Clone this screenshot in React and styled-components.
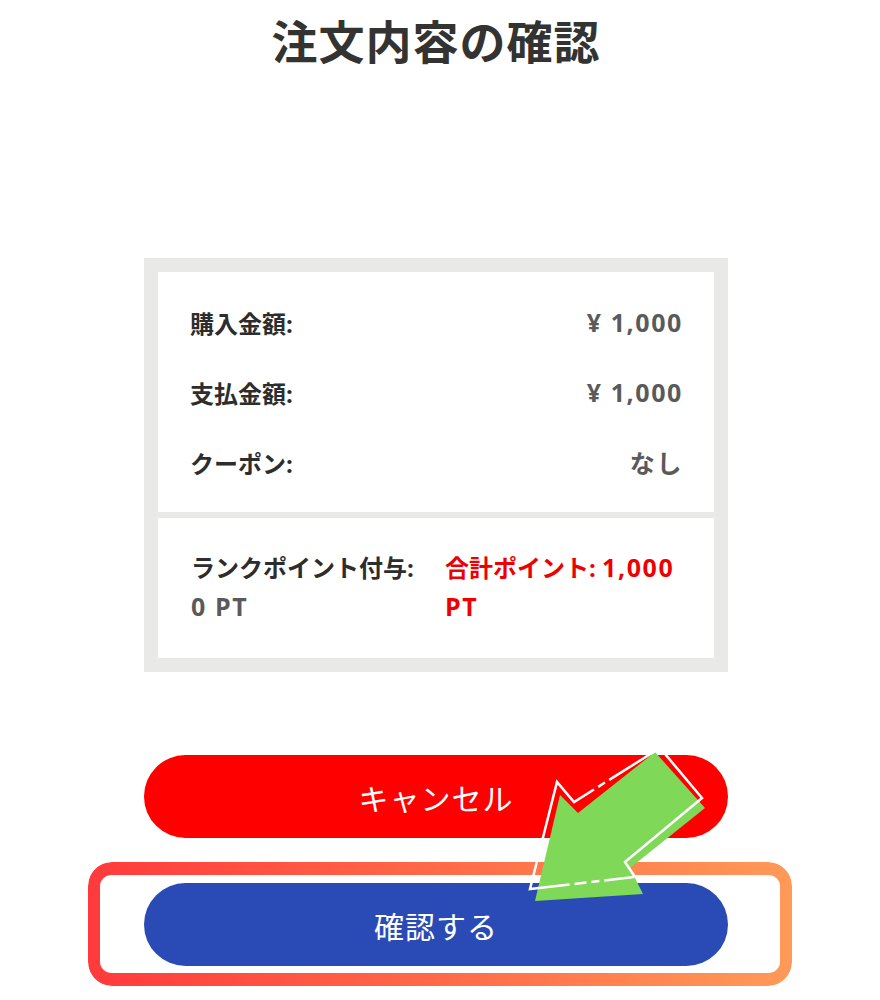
import styled, { createGlobalStyle } from "styled-components";

const GlobalStyle = createGlobalStyle`
    html, body {
        margin: 0;
        padding: 0;
        background: #ffffff;
    }
    body {
        font-family: "Open Sans", "Noto Sans CJK JP", sans-serif;
    }
`

const Page = styled.div`
    position: relative;
    width: 880px;
    height: 1000px;
    overflow: hidden;
    background: #ffffff;
`
const Title = styled.h1`
    margin: 0;
    padding-top: 10px;
    text-align: center;
    font-family: "Noto Sans CJK JP", sans-serif;
    font-size: 46px;
    line-height: 58px;
    font-weight: 700;
    color: #333331;
    letter-spacing: 1px;
    padding-right: 8px;
`
const Column = styled.div`
    width: 584px;
    margin-left: 144px;
`
const Summary = styled.div`
    margin-top: 190px;
    background: #e9e9e7;
    padding: 14px;
    display: flex;
    flex-direction: column;
    gap: 6px;
`
const Section = styled.div`
    background: #ffffff;
    padding: ${(p) => p.$pad};
`
const Row = styled.div`
    height: 70px;
    display: flex;
    align-items: center;
    justify-content: space-between;
    font-size: 24px;
    font-weight: 700;
`
const Label = styled.span`
    color: #2d2d2d;
    margin-left: -1px;
`
const Value = styled.span`
    color: #5a5a5a;
    font-size: 25px;
    letter-spacing: 1.6px;
    margin-right: -2px;
`
const PointGrid = styled.div`
    display: grid;
    grid-template-columns: 254px 1fr;
    font-size: 24px;
    line-height: 39px;
    font-weight: 700;
`
const PointCell = styled.div`
    color: ${(p) => (p.$red ? "#ee0000" : "#2d2d2d")};
    white-space: nowrap;
`
const Num = styled.span`
    font-size: 25px;
    letter-spacing: 1.6px;
    color: ${(p) => (p.$muted ? "#5a5a5a" : "inherit")};
`
const Buttons = styled.div`
    margin-top: 83px;
    display: flex;
    flex-direction: column;
    gap: 45px;
`
const PillButton = styled.button`
    width: 100%;
    height: 83px;
    border: none;
    border-radius: 42px;
    background: ${(p) => p.$bg};
    color: #ffffff;
    font-family: "Noto Sans CJK JP", sans-serif;
    font-size: 30px;
    font-weight: 400;
    letter-spacing: 1px;
    display: flex;
    align-items: center;
    justify-content: center;
    cursor: pointer;
`
const Highlight = styled.div`
    position: relative;
    &::before {
        content: "";
        position: absolute;
        top: -21px;
        bottom: -20px;
        left: -56px;
        right: -64px;
        border-radius: 24px;
        padding: 13px 12px;
        background: linear-gradient(90deg, #ff3a3c 0%, #ff6a48 50%, #ff9a58 100%);
        -webkit-mask: linear-gradient(#000 0 0) content-box, linear-gradient(#000 0 0);
        -webkit-mask-composite: xor;
        mask-composite: exclude;
        pointer-events: none;
    }
`
const Arrow = styled.svg`
    position: absolute;
    left: 520px;
    top: 740px;
    width: 200px;
    height: 170px;
    pointer-events: none;
`

const App = () => {
    return (
        <Page>
            <GlobalStyle />
            <Title>注文内容の確認</Title>
            <Column>
                <Summary>
                    <Section $pad="15px 33px">
                        <Row>
                            <Label>購入金額:</Label>
                            <Value>¥ 1,000</Value>
                        </Row>
                        <Row>
                            <Label>支払金額:</Label>
                            <Value>¥ 1,000</Value>
                        </Row>
                        <Row>
                            <Label>クーポン:</Label>
                            <Value>なし</Value>
                        </Row>
                    </Section>
                    <Section $pad="30px 33px 32px">
                        <PointGrid>
                            <PointCell>
                                ランクポイント付与:<br />
                                <Num $muted>0 PT</Num>
                            </PointCell>
                            <PointCell $red>
                                合計ポイント: <Num>1,000</Num><br />
                                <Num>PT</Num>
                            </PointCell>
                        </PointGrid>
                    </Section>
                </Summary>
                <Buttons>
                    <PillButton $bg="#ff0000">キャンセル</PillButton>
                    <Highlight>
                        <PillButton $bg="#2a4bb5">確認する</PillButton>
                    </Highlight>
                </Buttons>
            </Column>
            <Arrow viewBox="520 740 200 170">
                <polygon
                    points="535,901 560,795 578,813 655,752 705,808 630,868 643,894"
                    fill="#80d858"
                />
                <polyline
                    points="635,877 625,862 702,798 660,748"
                    fill="none"
                    stroke="#ffffff"
                    strokeWidth="2.5"
                />
                <polyline
                    points="660,748 574,802 557,782 530,889 635,877"
                    fill="none"
                    stroke="#ffffff"
                    strokeWidth="2.5"
                    strokeDasharray="60 5 8 5 200 5 12 5 8 5 30"
                />
            </Arrow>
        </Page>
    )
}
export default App
